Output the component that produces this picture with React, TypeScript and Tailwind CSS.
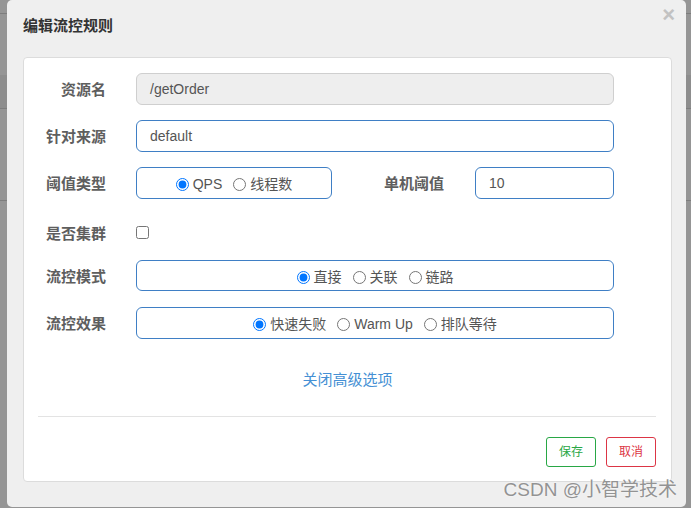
import React from "react";

const font = { fontFamily: "'Liberation Sans', 'Noto Sans CJK SC', sans-serif" };

function Radio({ label, checked, first }: { label: string; checked?: boolean; first?: boolean }) {
  return (
    <label className={`inline-flex items-center text-[14px] text-[#555] ${first ? "" : "ml-[11px]"}`}>
      <input type="radio" checked={!!checked} readOnly className="m-0 mr-[4px] w-[13px] h-[13px] accent-[#0075ff]" />
      <span>{label}</span>
    </label>
  );
}

function Label({ text, w = "w-[82px]" }: { text: string; w?: string }) {
  return <div className={`${w} shrink-0 text-right text-[15px] font-bold text-[#5e5e5e] leading-[22px] pt-[2px]`}>{text}</div>;
}

export default function App() {
  return (
    <div className="relative w-[691px] h-[508px] overflow-hidden bg-[#959595]" style={font}>
      {/* background page */}
      <div className="flex flex-col">
        <div className="h-[14px] border-b border-[#7d7d7d]" />
        <div className="h-[61px]" />
        <div className="h-[34px] bg-[#8d8d8d] border-b border-[#7d7d7d]" />
        <div className="h-[92px] border-b border-[#7d7d7d]" />
      </div>

      {/* modal */}
      <div className="absolute left-[7px] top-0 w-[679px] h-[507px] rounded-[5px] bg-[#efefef] pl-[16px] pr-[14px] pt-[15px]">
        <div className="absolute right-[11px] top-[3px] text-[22px] font-bold leading-[24px] text-[#c2c2c2]">×</div>
        <div className="text-[15px] font-bold text-[#333] leading-[22px]">编辑流控规则</div>

        <div className="mt-[20px] bg-white border border-[#dcdcdc] rounded-[4px] pt-[15px] pb-[14px]">
          {/* row 1 */}
          <div className="flex items-center h-[32px] mb-[15px]">
            <Label text="资源名" />
            <div className="ml-[30px] w-[478px] h-[32px] rounded-[6px] border border-[#cfcfcf] bg-[#eeeeee] flex items-center pl-[13px] text-[14px] text-[#555]">
              /getOrder
            </div>
          </div>
          {/* row 2 */}
          <div className="flex items-center h-[32px] mb-[15px]">
            <Label text="针对来源" />
            <div className="ml-[30px] w-[478px] h-[32px] rounded-[6px] border border-[#3f7fc5] bg-white flex items-center pl-[13px] text-[14px] text-[#555]">
              default
            </div>
          </div>
          {/* row 3 */}
          <div className="flex items-center h-[32px] mb-[15px]">
            <Label text="阈值类型" />
            <div className="ml-[30px] w-[196px] h-[32px] rounded-[6px] border border-[#3f7fc5] bg-white flex items-center justify-center pt-[2px]">
              <Radio label="QPS" checked first />
              <Radio label="线程数" />
            </div>
            <Label text="单机阈值" w="w-[112px]" />
            <div className="ml-[31px] w-[139px] h-[32px] rounded-[6px] border border-[#3f7fc5] bg-white flex items-center pl-[13px] text-[14px] text-[#555]">
              10
            </div>
          </div>
          {/* row 4 */}
          <div className="flex items-center h-[31px] pt-[6px] mb-[15px]">
            <Label text="是否集群" />
            <input type="checkbox" readOnly className="ml-[30px] m-0 w-[13px] h-[13px]" />
          </div>
          {/* row 5 */}
          <div className="flex items-center h-[31px] mb-[16px]">
            <Label text="流控模式" />
            <div className="ml-[30px] w-[478px] h-[31px] rounded-[6px] border border-[#3f7fc5] bg-white flex items-center justify-center pt-[3px]">
              <Radio label="直接" checked first />
              <Radio label="关联" />
              <Radio label="链路" />
            </div>
          </div>
          {/* row 6 */}
          <div className="flex items-center h-[32px]">
            <Label text="流控效果" />
            <div className="ml-[30px] w-[478px] h-[32px] rounded-[6px] border border-[#3f7fc5] bg-white flex items-center justify-center pt-[3px]">
              <Radio label="快速失败" checked first />
              <Radio label="Warm Up" />
              <Radio label="排队等待" />
            </div>
          </div>

          <div className="mt-[30px] text-center text-[15px] leading-[22px] text-[#4590d4]">关闭高级选项</div>

          <div className="mt-[25px] ml-[14px] mr-[15px] h-px bg-[#e3e3e3]" />

          <div className="mt-[20px] mr-[15px] flex justify-end gap-[10px]">
            <div className="w-[50px] h-[30px] rounded-[3px] border border-[#28a745] text-[#28a745] text-[12px] flex items-center justify-center">保存</div>
            <div className="w-[50px] h-[30px] rounded-[3px] border border-[#dc3545] text-[#dc3545] text-[12px] flex items-center justify-center">取消</div>
          </div>
        </div>
      </div>

      {/* watermark */}
      <div className="absolute right-[14px] top-[478px] text-[19px] leading-[24px] text-[#939393] [text-shadow:0_0_2px_#fff]">
        CSDN @小智学技术
      </div>
    </div>
  );
}
